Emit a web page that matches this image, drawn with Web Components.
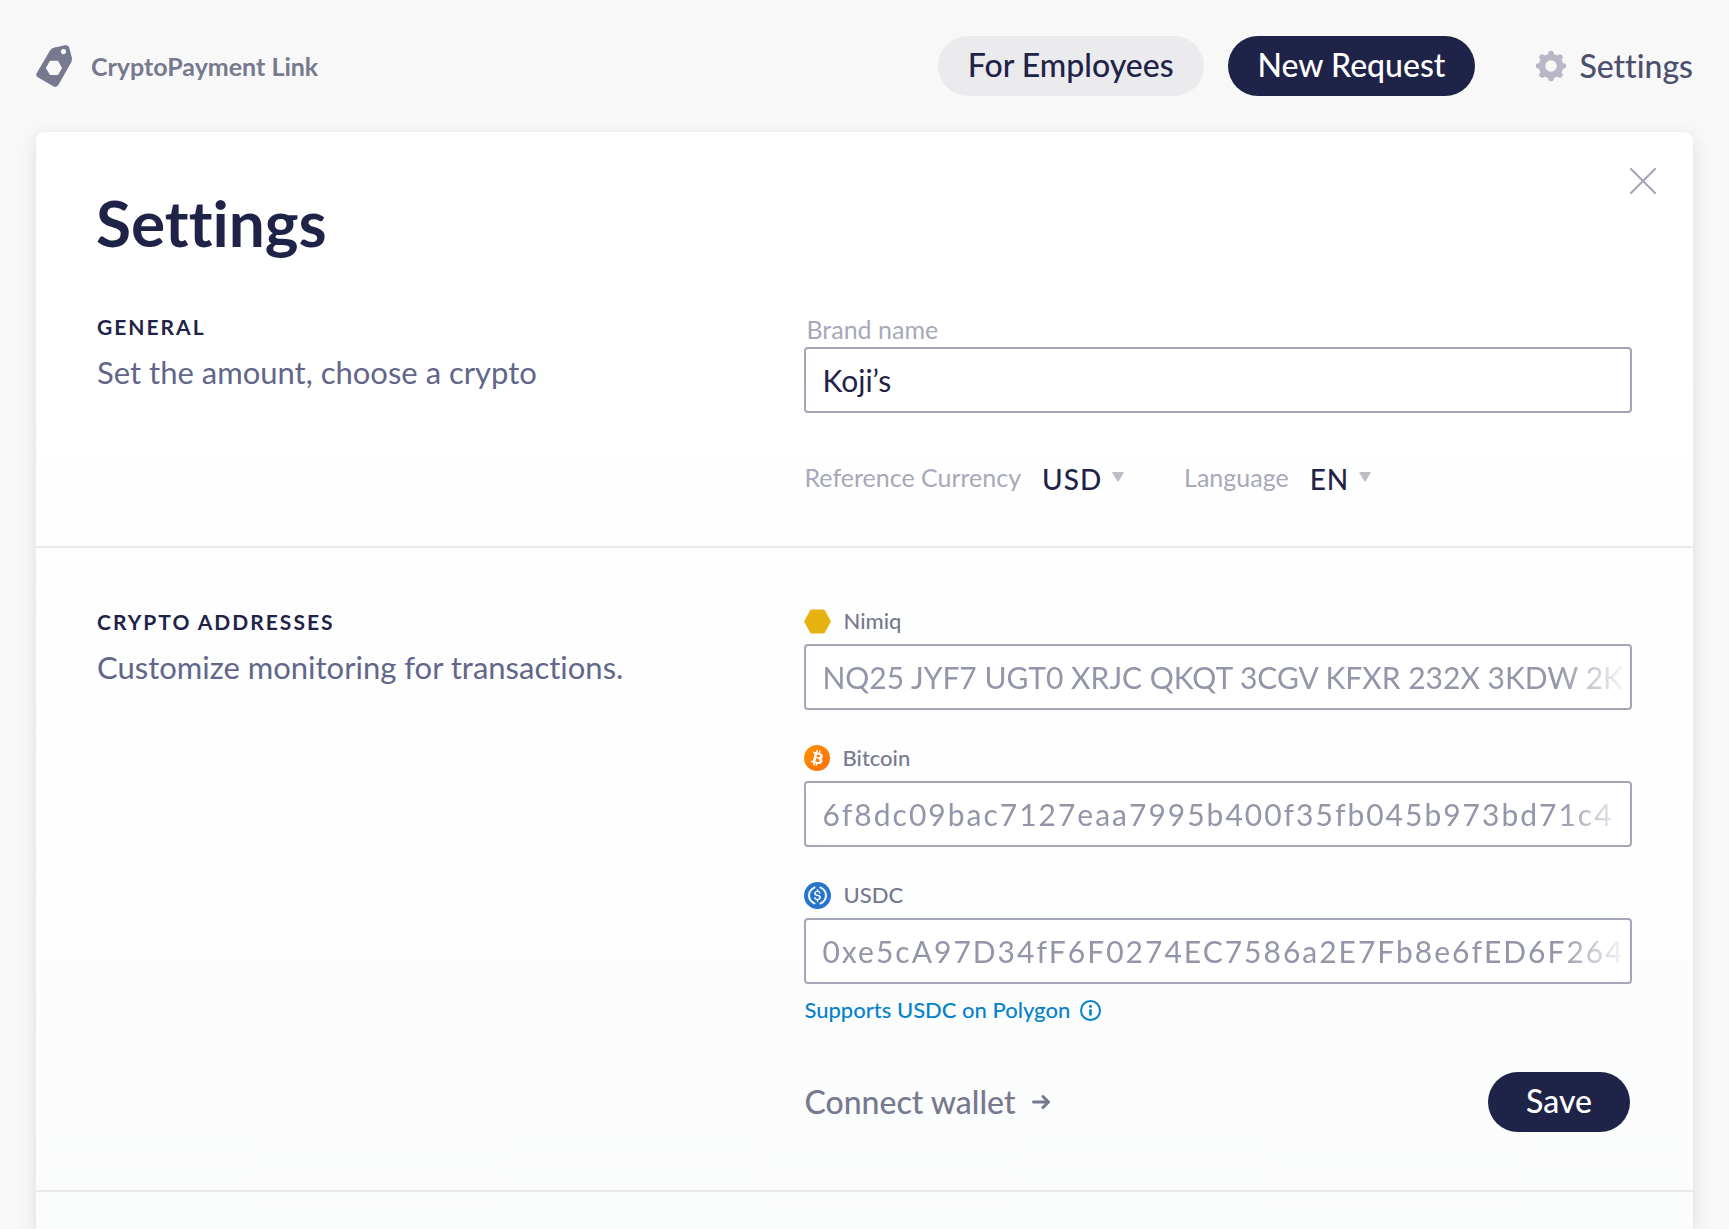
<!DOCTYPE html>
<html lang="en">
<head>
<meta charset="utf-8">
<meta name="viewport" content="width=device-width, initial-scale=1">
<title>CryptoPayment Link – Settings</title>
<style>
  html, body { margin: 0; }
  body {
    --navy: #1f2348;
    --muted: #77798f;
    --faint: #a7a8b9;
    --line: #a5a7b8;
    --rule: #e9e9ed;
    background: #f8f8f8;
    color: var(--navy);
    font-family: Lato, "Open Sans", sans-serif;
    font-size: 32px;
    line-height: 40px;
    font-variant-ligatures: none;
  }
</style>
</head>
<body>
<cpl-app></cpl-app>
<script>
const define = (name, html, setup) => {
  const tpl = document.createElement('template');
  tpl.innerHTML = '<style>*{box-sizing:border-box}button,input,select{font:inherit;color:inherit;margin:0}svg{display:block;flex:none}</style>' + html;
  customElements.define(name, class extends HTMLElement {
    constructor() {
      super();
      this.attachShadow({ mode: 'open' }).append(tpl.content.cloneNode(true));
    }
    connectedCallback() { if (setup) setup(this, this.shadowRoot); }
  });
};

define('cpl-button', `
<style>
  :host { display: block; }
  button { height: 60px; padding: 0 30px 3px; border: 0; border-radius: 30px; background: var(--navy); color: #fff; font-weight: 500; cursor: pointer; white-space: nowrap; }
  :host([tone=soft]) button { background: #ebebed; color: var(--navy); }
  :host([size=small]) button { padding: 0 38px 3px; }
</style>
<button type="button"><slot></slot></button>`);

define('cpl-header', `
<style>
  :host { display: block; }
  header { display: flex; align-items: center; justify-content: space-between; height: 132px; padding: 0 36px; }
  a { color: inherit; text-decoration: none; display: flex; align-items: center; }
  .brand { gap: 18px; color: var(--muted); font-size: 25px; font-weight: 700; }
  nav { display: flex; align-items: center; gap: 24px; }
  .settings { gap: 12px; margin-left: 36px; color: #4c4f6d; font-weight: 500; }
</style>
<header>
  <a class="brand" href="#home">
    <svg width="37" height="42" viewBox="0 0 37 42"><path fill="#77798f" fill-rule="evenodd" d="M.8 28 14 5.500Q15.500 3 18.500 2.400L29 .3Q32.500-.3 33.300 3L35.800 12.500Q36.300 15.500 35 17.800L22.500 39.800Q20.500 43 17.200 41.300L1.800 32.300Q-1 30.500.8 28ZM14 15.700 9.800 23 14 30H22L26 23 22 15.700ZM27.500 4a2.600 2.600 0 1 0 0 5.200 2.600 2.600 0 0 0 0-5.200Z"/></svg>
    <span>CryptoPayment Link</span>
  </a>
  <nav>
    <cpl-button tone="soft">For Employees</cpl-button>
    <cpl-button>New Request</cpl-button>
    <a class="settings" href="#settings">
      <svg width="32" height="32" viewBox="-16 -16 32 32" fill="none" stroke="#b9b7c5"><circle r="9" stroke-width="6.500"/><path stroke-width="5.600" stroke-linecap="round" d="M0-9V-12.400M0 9V12.400M-9 0H-12.400M9 0H12.400M6.500-6.500 8.900-8.900M-6.500-6.500-8.900-8.900M6.500 6.500 8.900 8.900M-6.500 6.500-8.900 8.900"/></svg>
      <span>Settings</span>
    </a>
  </nav>
</header>`);

define('cpl-section', `
<style>
  :host { display: block; border-bottom: 2px solid var(--rule); }
  section { display: grid; grid-template-columns: 707fr 827fr; padding: 0 61px; }
  h2 { margin: 0; font-size: 21px; line-height: 30px; font-weight: 700; letter-spacing: 2px; text-transform: uppercase; }
  p { margin: 10px 0 0; color: #62668a; font-size: 31px; }
</style>
<section>
  <div><h2><slot name="title"></slot></h2><p><slot name="text"></slot></p></div>
  <div><slot></slot></div>
</section>`);

define('cpl-field', `
<style>
  :host { display: block; }
  label { display: flex; align-items: center; gap: 12px; height: 28px; margin-bottom: 9px; font-size: 22px; line-height: 28px; font-weight: 500; color: var(--muted); }
  :host([plain]) label { font-size: 25px; font-weight: 400; color: var(--faint); margin-bottom: 4px; padding-left: 2px; }
  .box { height: 66px; border: 2px solid var(--line); border-radius: 4px; background: #fff; display: flex; }
  input { flex: 1; min-width: 0; height: 100%; border: 0; outline: 0; background: none; padding: 0 4px 0 16px; color: #9395a9; font-size: 30px; }
  :host([plain]) input { color: var(--navy); }
  :host([long]) input { -webkit-mask-image: linear-gradient(to left, transparent 0, #000 72px); mask-image: linear-gradient(to left, transparent 0, #000 72px); }
  :host([spaced]) input { letter-spacing: 2px; }
</style>
<label for="f"><slot name="icon"></slot><span></span></label>
<div class="box"><input id="f" type="text"></div>`,
(el, root) => {
  root.querySelector('span').textContent = el.getAttribute('label');
  root.querySelector('input').value = el.getAttribute('value');
});

define('cpl-select', `
<style>
  :host { display: flex; align-items: center; color: var(--faint); font-size: 25px; }
  .pick { display: flex; align-items: center; gap: 9px; margin-left: 21px; color: var(--navy); font-size: 28px; font-weight: 500; }
  select { appearance: none; -webkit-appearance: none; border: 0; outline: 0; background: none; padding: 2px 0 0; height: 40px; letter-spacing: 1px; }
</style>
<label for="s"></label>
<span class="pick"><select id="s"><option></option></select>
<svg width="12" height="10" viewBox="0 0 12 10"><path fill="#bfbdca" d="M.8 0H11.200Q12.200 0 11.700 1L6.600 9.300Q6 10 5.400 9.300L.3 1Q-.2 0 .8 0Z"/></svg></span>`,
(el, root) => {
  root.querySelector('label').textContent = el.getAttribute('label');
  root.querySelector('option').textContent = el.getAttribute('value');
});

define('cpl-app', `
<style>
  :host { display: flex; flex-direction: column; min-height: 100vh; }
  main { position: relative; flex: 1; margin: 0 36px; border-radius: 9px 9px 0 0; background: linear-gradient(#fff 0, #fff 240px, #fbfcfc 100%); box-shadow: 0 6px 18px rgba(31,35,72,.13); }
  h1 { margin: 0; padding: 53px 60px 0; font-size: 64px; line-height: 76px; font-weight: 700; }
  .close { position: absolute; top: 28px; right: 29px; width: 42px; height: 42px; border: 0; padding: 8px; background: none; cursor: pointer; }
  cpl-section.one { padding: 51px 0 49px; }
  cpl-section.two { padding: 59px 0 58px; }
  .general { padding-top: 3px; }
  .selects { display: flex; flex-wrap: wrap; gap: 60px; margin-top: 44px; }
  .fields { display: flex; flex-direction: column; gap: 34px; }
  .hint { display: inline-flex; align-items: center; gap: 10px; margin-top: 12px; color: #0582ca; font-size: 22px; line-height: 28px; font-weight: 500; text-decoration: none; }
  .actions { display: flex; align-items: center; justify-content: space-between; margin-top: 48px; padding-right: 2px; }
  .actions a { display: flex; align-items: center; gap: 16px; color: var(--muted); font-weight: 500; text-decoration: none; }
  .stack { display: flex; flex-direction: column; align-items: stretch; }
  .stack .hint { align-self: flex-start; }
</style>
<cpl-header></cpl-header>
<main>
  <button class="close" type="button" aria-label="Close"><svg width="26" height="26" viewBox="0 0 26 26" fill="none" stroke="#a5a4b6" stroke-width="2" stroke-linecap="round"><path d="M1 1 25 25M25 1 1 25"/></svg></button>
  <h1>Settings</h1>
  <cpl-section class="one">
    <span slot="title">General</span><span slot="text">Set the amount, choose a crypto</span>
    <div class="general">
      <cpl-field plain label="Brand name" value="Koji’s"></cpl-field>
      <div class="selects">
        <cpl-select label="Reference Currency" value="USD"></cpl-select>
        <cpl-select label="Language" value="EN"></cpl-select>
      </div>
    </div>
  </cpl-section>
  <cpl-section class="two">
    <span slot="title">Crypto addresses</span><span slot="text">Customize monitoring for transactions.</span>
    <div class="stack">
      <div class="fields">
        <cpl-field long label="Nimiq" value="NQ25 JYF7 UGT0 XRJC QKQT 3CGV KFXR 232X 3KDW 2K">
          <svg slot="icon" width="27" height="25" viewBox="0 0 27 25"><path fill="#e9b213" d="M7.600.5H19.400Q20.300.5 20.800 1.300L26.600 11.700Q27 12.500 26.600 13.300L20.800 23.700Q20.300 24.500 19.400 24.500H7.600Q6.700 24.500 6.200 23.700L.4 13.300Q0 12.500.4 11.700L6.200 1.300Q6.700.5 7.600.5Z"/></svg>
        </cpl-field>
        <cpl-field long spaced label="Bitcoin" value="6f8dc09bac7127eaa7995b400f35fb045b973bd71c4">
          <svg slot="icon" width="26" height="26" viewBox="0 0 32 32"><defs><linearGradient id="o" x1="0" y1="0" x2="1" y2="1"><stop offset="0" stop-color="#ff9500"/><stop offset="1" stop-color="#ff6a0a"/></linearGradient></defs><circle cx="16" cy="16" r="16" fill="url(#o)"/><path fill="#fff" d="M23.189 14.020c.314-2.096-1.283-3.223-3.465-3.975l.708-2.840-1.728-.43-.69 2.765c-.454-.114-.92-.22-1.385-.326l.695-2.783L15.596 6l-.708 2.839c-.376-.086-.746-.17-1.104-.26l.002-.009-2.384-.595-.46 1.846s1.283.294 1.256.312c.7.175.826.638.805 1.006l-.806 3.235c.048.012.11.03.18.057l-.183-.045-1.130 4.532c-.086.212-.303.531-.793.41.018.025-1.256-.313-1.256-.313l-.858 1.978 2.250.561c.418.105.828.215 1.231.318l-.715 2.872 1.727.43.708-2.840c.472.127.93.245 1.378.357l-.706 2.828 1.728.43.715-2.866c2.948.558 5.164.333 6.097-2.333.752-2.146-.037-3.385-1.588-4.192 1.130-.26 1.980-1.003 2.207-2.538zm-3.950 5.538c-.533 2.147-4.148.986-5.320.695l.95-3.805c1.172.293 4.929.872 4.370 3.110zm.535-5.569c-.487 1.953-3.495.96-4.470.717l.86-3.450c.975.243 4.118.696 3.610 2.733z"/></svg>
        </cpl-field>
        <cpl-field long spaced label="USDC" value="0xe5cA97D34fF6F0274EC7586a2E7Fb8e6fED6F264">
          <svg slot="icon" width="27" height="27" viewBox="0 0 32 32"><circle cx="16" cy="16" r="16" fill="#2775ca"/><path fill="#fff" d="M20.022 18.124c0-2.124-1.280-2.852-3.840-3.156-1.828-.243-2.193-.728-2.193-1.578 0-.85.61-1.396 1.828-1.396 1.097 0 1.707.364 2.011 1.275a.458.458 0 00.427.303h.975a.416.416 0 00.427-.425v-.06a3.040 3.040 0 00-2.743-2.489V9.142c0-.243-.183-.425-.487-.486h-.915c-.243 0-.426.182-.487.486v1.396c-1.829.242-2.986 1.456-2.986 2.974 0 2.002 1.218 2.791 3.778 3.095 1.707.303 2.255.668 2.255 1.639 0 .97-.853 1.638-2.011 1.638-1.585 0-2.133-.667-2.316-1.578-.06-.242-.244-.364-.427-.364h-1.036a.416.416 0 00-.426.425v.06c.243 1.518 1.219 2.610 3.230 2.914v1.457c0 .242.183.425.487.485h.915c.243 0 .426-.182.487-.485V21.340c1.829-.303 3.047-1.578 3.047-3.217z"/><path fill="#fff" stroke="#fff" stroke-width=".5" d="M12.892 24.497c-4.754-1.700-7.192-6.980-5.424-11.653.914-2.550 2.925-4.491 5.424-5.402.244-.121.365-.303.365-.607v-.85c0-.242-.121-.424-.365-.485-.061 0-.183 0-.244.06a10.895 10.895 0 00-7.130 13.717c1.096 3.400 3.717 6.010 7.130 7.102.244.121.488 0 .548-.243.061-.06.061-.122.061-.243v-.85c0-.182-.182-.424-.365-.546zm6.460-18.936c-.244-.122-.488 0-.548.242-.061.061-.061.122-.061.243v.85c0 .243.182.485.365.607 4.754 1.700 7.192 6.980 5.424 11.653-.914 2.550-2.925 4.491-5.424 5.402-.244.121-.365.303-.365.607v.85c0 .242.121.424.365.485.061 0 .183 0 .244-.06a10.895 10.895 0 007.130-13.717c-1.096-3.460-3.778-6.070-7.130-7.162z"/></svg>
        </cpl-field>
      </div>
      <a class="hint" href="#polygon"><span>Supports USDC on Polygon</span>
        <svg width="21" height="21" viewBox="0 0 21 21" fill="none" stroke="#0582ca" stroke-width="2"><circle cx="10.500" cy="10.500" r="9.500"/><path stroke-width="2.600" stroke-linecap="round" d="M10.500 10.300V14.500"/><circle cx="10.500" cy="6.300" r="1.500" fill="#0582ca" stroke="none"/></svg></a>
    </div>
    <div class="actions">
      <a href="#wallet"><span>Connect wallet</span>
        <svg width="18" height="16" viewBox="0 0 18 16" fill="none" stroke="#77798f" stroke-width="3" stroke-linecap="round" stroke-linejoin="round"><path d="M1.500 8H16M11 2.500 16.500 8 11 13.500"/></svg></a>
      <cpl-button size="small">Save</cpl-button>
    </div>
  </cpl-section>
</main>`);
</script>
</body>
</html>
